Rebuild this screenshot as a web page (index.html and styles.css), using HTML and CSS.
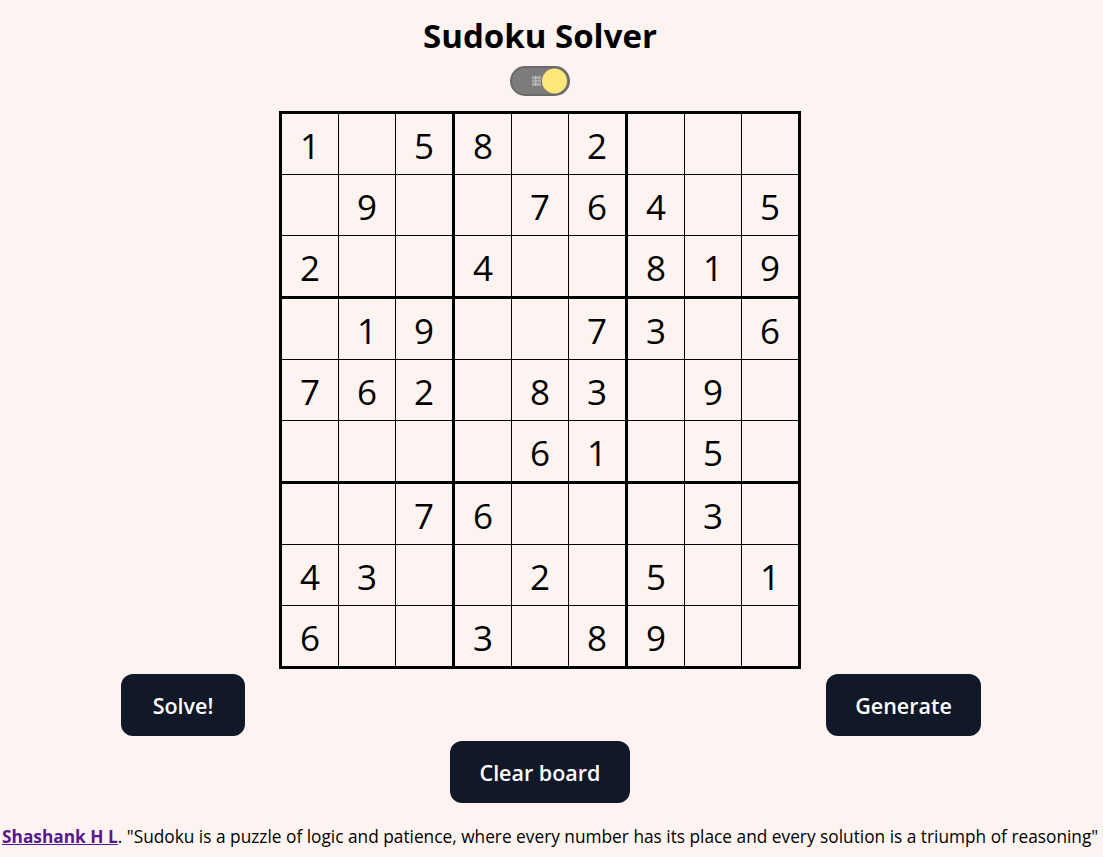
FILE: index.html
```html
<!DOCTYPE html>
<html lang="en">
<head>
<meta charset="utf-8">
<title>Sudoku Solver</title>
<link rel="stylesheet" href="styles.css">
</head>
<body>
<div class="center-col">
  <h1 class="title">Sudoku Solver</h1>
  <div class="toggle-wrap">
    <button class="toggle" aria-label="Toggle theme">
      <svg width="60" height="30" viewBox="0 0 60 30">
        <rect x="1" y="1" width="58" height="28" rx="14" ry="14" fill="#7d7b7b" stroke="#6b6969" stroke-width="2"/>
        <rect x="22" y="10" width="9" height="10" fill="#a9a7a7"/>
        <line x1="22" y1="13.5" x2="31" y2="13.5" stroke="#8e8c8c" stroke-width="1"/>
        <line x1="22" y1="16.5" x2="31" y2="16.5" stroke="#8e8c8c" stroke-width="1"/>
        <line x1="25.5" y1="10" x2="25.5" y2="20" stroke="#bdbbbb" stroke-width="1"/>
        <circle cx="44.5" cy="15" r="12.5" fill="#fde779"/>
      </svg>
    </button>
  </div>
  <div class="board">
    <div class="cell">1</div><div class="cell"></div><div class="cell c3">5</div><div class="cell">8</div><div class="cell"></div><div class="cell c3">2</div><div class="cell"></div><div class="cell"></div><div class="cell c9"></div>
    <div class="cell"></div><div class="cell">9</div><div class="cell c3"></div><div class="cell"></div><div class="cell">7</div><div class="cell c3">6</div><div class="cell">4</div><div class="cell"></div><div class="cell c9">5</div>
    <div class="cell r3">2</div><div class="cell r3"></div><div class="cell r3 c3"></div><div class="cell r3">4</div><div class="cell r3"></div><div class="cell r3 c3"></div><div class="cell r3">8</div><div class="cell r3">1</div><div class="cell r3 c9">9</div>
    <div class="cell"></div><div class="cell">1</div><div class="cell c3">9</div><div class="cell"></div><div class="cell"></div><div class="cell c3">7</div><div class="cell">3</div><div class="cell"></div><div class="cell c9">6</div>
    <div class="cell">7</div><div class="cell">6</div><div class="cell c3">2</div><div class="cell"></div><div class="cell">8</div><div class="cell c3">3</div><div class="cell"></div><div class="cell">9</div><div class="cell c9"></div>
    <div class="cell r3"></div><div class="cell r3"></div><div class="cell r3 c3"></div><div class="cell r3"></div><div class="cell r3">6</div><div class="cell r3 c3">1</div><div class="cell r3"></div><div class="cell r3">5</div><div class="cell r3 c9"></div>
    <div class="cell"></div><div class="cell"></div><div class="cell c3">7</div><div class="cell">6</div><div class="cell"></div><div class="cell c3"></div><div class="cell"></div><div class="cell">3</div><div class="cell c9"></div>
    <div class="cell">4</div><div class="cell">3</div><div class="cell c3"></div><div class="cell"></div><div class="cell">2</div><div class="cell c3"></div><div class="cell">5</div><div class="cell"></div><div class="cell c9">1</div>
    <div class="cell r9">6</div><div class="cell r9"></div><div class="cell r9 c3"></div><div class="cell r9">3</div><div class="cell r9"></div><div class="cell r9 c3">8</div><div class="cell r9">9</div><div class="cell r9"></div><div class="cell r9 c9"></div>
  </div>
</div>
<div class="btn-row">
  <button class="btn btn-solve">Solve!</button>
  <button class="btn btn-generate">Generate</button>
</div>
<div class="center-col">
  <button class="btn btn-clear">Clear board</button>
</div>
<p class="footer"><a href="#" class="author">Shashank H L</a>. "Sudoku is a puzzle of logic and patience, where every number has its place and every solution is a triumph of reasoning"</p>
</body>
</html>
```

FILE: styles.css
```css
html, body {
  margin: 0;
  padding: 0;
}
body {
  background: #fdf4f2;
  font-family: "Open Sans", "Noto Sans", sans-serif;
  color: #000;
}
.center-col {
  width: 1080px;
  display: flex;
  flex-direction: column;
  align-items: center;
}
.title {
  font-size: 33px;
  font-weight: 700;
  margin: 14px 0 0 0;
  line-height: 44px;
}
.toggle-wrap {
  margin-top: 8px;
  height: 30px;
}
.toggle {
  border: 0;
  padding: 0;
  background: none;
  display: block;
  width: 60px;
  height: 30px;
}
.toggle svg {
  display: block;
}
.board {
  margin-top: 15px;
  display: grid;
  grid-template-columns: repeat(9, auto);
  border: 3px solid #000;
}
.cell {
  width: 56px;
  height: 58px;
  border-right: 1px solid #000;
  border-bottom: 1px solid #000;
  display: flex;
  align-items: center;
  justify-content: center;
  font-size: 35px;
  line-height: 1;
  padding-top: 2px;
  box-sizing: content-box;
}
.cell.c3 {
  border-right: 3px solid #000;
}
.cell.c9 {
  border-right: 0;
}
.cell.r3 {
  border-bottom: 3px solid #000;
}
.cell.r9 {
  border-bottom: 0;
}
.btn-row {
  display: flex;
  justify-content: space-between;
  padding: 0 122px 0 121px;
  margin-top: 5px;
}
.btn {
  background: #111827;
  color: #fff;
  border: 0;
  border-radius: 12px;
  height: 62px;
  font-family: "Open Sans", "Noto Sans", sans-serif;
  font-size: 21.5px;
  font-weight: 600;
  padding: 0;
}
.btn-solve {
  width: 124px;
}
.btn-generate {
  width: 155px;
}
.btn-clear {
  width: 180px;
  margin-top: 5px;
}
.footer {
  margin: 22px 0 0 2px;
  font-size: 17.3px;
  line-height: 24px;
  white-space: nowrap;
}
.author {
  color: #551a8b;
  font-weight: 700;
}
```
